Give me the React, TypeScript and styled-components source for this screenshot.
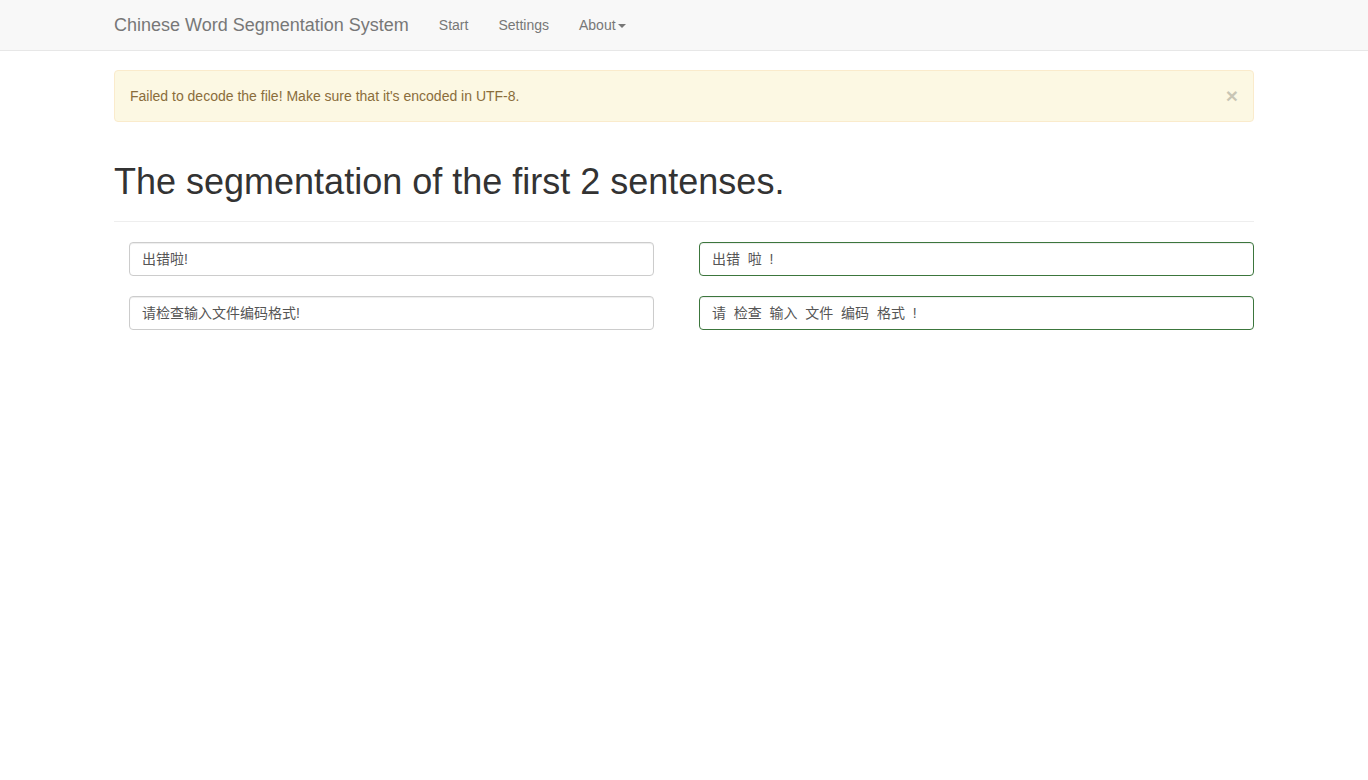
import * as React from "react";
import styled, { createGlobalStyle } from "styled-components";

const GlobalStyle = createGlobalStyle`
  * {
    box-sizing: border-box;
  }
  body {
    margin: 0;
    font-family: "Liberation Sans", "Noto Sans CJK SC", sans-serif;
    font-size: 14px;
    line-height: 1.42857143;
    color: #333;
    background: #fff;
  }
`;

const Navbar = styled.nav`
  height: 51px;
  background-color: #f8f8f8;
  border-bottom: 1px solid #e7e7e7;
  margin-bottom: 19px;
`;

const Container = styled.div`
  width: 1170px;
  margin: 0 auto;
  padding: 0 15px;
`;

const NavInner = styled(Container)`
  display: flex;
  align-items: center;
  height: 50px;
`;

const Brand = styled.a`
  font-size: 18px;
  line-height: 20px;
  color: #777;
  padding: 15px 15px 15px 0;
  text-decoration: none;
`;

const NavList = styled.ul`
  display: flex;
  list-style: none;
  margin: 0;
  padding: 0;
`;

const NavLink = styled.a`
  display: block;
  padding: 15px;
  line-height: 20px;
  color: #777;
  text-decoration: none;
`;

const Caret = styled.span`
  display: inline-block;
  width: 0;
  height: 0;
  margin-left: 2px;
  vertical-align: middle;
  border-top: 4px dashed #777;
  border-right: 4px solid transparent;
  border-left: 4px solid transparent;
`;

const Alert = styled.div`
  display: flex;
  justify-content: space-between;
  align-items: flex-start;
  padding: 15px;
  margin-bottom: 20px;
  border: 1px solid #faebcc;
  border-radius: 4px;
  background-color: #fcf8e3;
  color: #8a6d3b;
`;

const CloseButton = styled.button`
  margin-top: -1px;
  padding: 0;
  border: 0;
  background: transparent;
  font-family: "Liberation Sans", sans-serif;
  font-size: 21px;
  font-weight: bold;
  line-height: 1;
  color: #000;
  opacity: 0.2;
  cursor: pointer;
`;

const PageHeader = styled.div`
  margin: 40px 0 20px;
  padding-bottom: 9px;
  border-bottom: 1px solid #eee;
`;

const Title = styled.h1`
  margin: 0 0 10px;
  font-size: 36px;
  font-weight: 500;
  line-height: 1.1;
  color: #333;
`;

const SentenceGrid = styled.div`
  display: grid;
  grid-template-columns: 1fr 1fr;
  column-gap: 30px;
  row-gap: 20px;
`;

const Cell = styled.div<{ $inset?: boolean }>`
  padding: ${(p) => (p.$inset ? "0 15px" : "0")};
`;

const Field = styled.input<{ $success?: boolean }>`
  display: block;
  width: 100%;
  height: 34px;
  padding: 5px 12px 7px;
  font-family: "Liberation Sans", "Noto Sans CJK SC", sans-serif;
  font-size: 14px;
  line-height: 1.42857143;
  color: #555;
  background-color: #fff;
  border: 1px solid ${(p) => (p.$success ? "#3c763d" : "#ccc")};
  border-radius: 4px;
  box-shadow: inset 0 1px 1px rgba(0, 0, 0, 0.075);
  outline: none;
  white-space: pre;
`;

const sentences = [
  { raw: "出错啦!", seg: "出错  啦  !" },
  { raw: "请检查输入文件编码格式!", seg: "请  检查  输入  文件  编码  格式  !" },
];

export default function App() {
  return (
    <>
      <GlobalStyle />
      <Navbar>
        <NavInner>
          <Brand href="#">Chinese Word Segmentation System</Brand>
          <NavList>
            <li>
              <NavLink href="#">Start</NavLink>
            </li>
            <li>
              <NavLink href="#">Settings</NavLink>
            </li>
            <li>
              <NavLink href="#">
                About<Caret />
              </NavLink>
            </li>
          </NavList>
        </NavInner>
      </Navbar>
      <Container>
        <Alert>
          <span>Failed to decode the file! Make sure that it's encoded in UTF-8.</span>
          <CloseButton aria-label="Close">×</CloseButton>
        </Alert>
        <PageHeader>
          <Title>The segmentation of the first 2 sentenses.</Title>
        </PageHeader>
        <SentenceGrid>
          {sentences.map((s, i) => (
            <React.Fragment key={i}>
              <Cell $inset>
                <Field readOnly value={s.raw} />
              </Cell>
              <Cell>
                <Field $success readOnly value={s.seg} />
              </Cell>
            </React.Fragment>
          ))}
        </SentenceGrid>
      </Container>
    </>
  );
}
